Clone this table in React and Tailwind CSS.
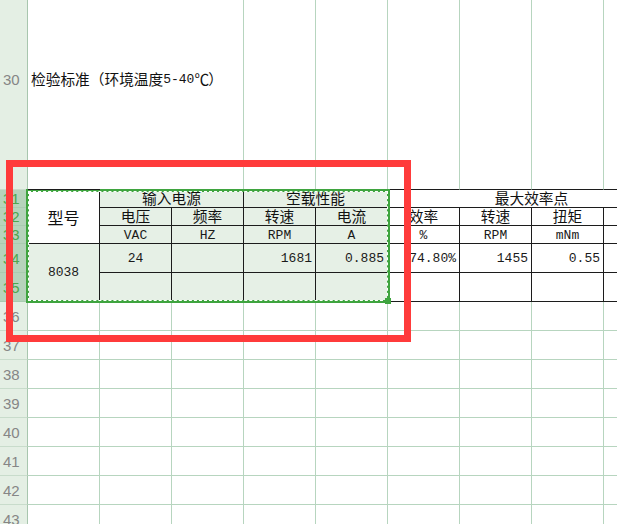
import React from "react";

const K = "border-[#1c1c1c]";
const CN = "font-['Noto_Sans_CJK_SC',sans-serif] text-[14.7px] leading-none text-[#111]";
const MONO = "font-['Liberation_Mono',monospace] text-[13px] leading-none text-[#1a1a1a]";

function RowHead({ n, sel, tall }) {
  const base =
    "flex items-center pl-[3px] border-r border-b font-['Liberation_Sans',sans-serif] text-[15px] leading-none whitespace-nowrap overflow-visible";
  const look = sel
    ? " bg-[#b6d3bb] text-[#4fa64f] border-r-[#9cc2a4] border-b-[#a9cbb0]"
    : " bg-[#e4efe4] text-[#868686] border-r-[#a8c6ae] border-b-[#c8dccb]";
  return <div className={base + look + (tall ? " pb-[30px]" : "")}>{n}</div>;
}

function G() {
  return <div className="border-r border-b border-[#b7d5bf]" />;
}

function T({ sel, white, align = "center", font = "mono", children, extra = "" }) {
  const bg = sel ? " bg-[#e6f0e6]" : white ? " bg-white" : "";
  const al = align === "right" ? " justify-end pr-[3px]" : " justify-center";
  const f = font === "cn" ? " " + CN : " " + MONO;
  return (
    <div className={"flex items-center border-r border-b " + K + bg + al + f + " " + extra}>
      {children}
    </div>
  );
}

export default function App() {
  const lower = [];
  for (let n = 36; n <= 43; n++) {
    lower.push(<RowHead key={"h" + n} n={n} />);
    for (let c = 0; c < 9; c++) lower.push(<G key={n + "-" + c} />);
  }
  return (
    <div className="relative w-[617px] h-[524px] overflow-hidden bg-white">
      <div className="grid grid-cols-[28px_repeat(9,72px)] grid-rows-[190px_18px_18px_18px_29px_29px_29px_29px_29px_29px_29px_29px_29px_29px]">
        {/* row 30 */}
        <RowHead n={30} tall />
        <div className={"flex items-center pb-[30px] pl-[3px] border-b whitespace-nowrap overflow-visible relative z-10 " + K + " " + CN}>
          检验标准（环境温度
          <span className="font-['Liberation_Mono',monospace] text-[13px]">5-40</span>
          <span className="tracking-[-4px]">℃</span>
          <span className="pl-[3px]">）</span>
        </div>
        <div className={"border-b " + K} />
        <div className="border-r border-b border-r-[#b7d5bf] border-b-[#1c1c1c]" />
        <div className="border-r border-b border-r-[#b7d5bf] border-b-[#1c1c1c]" />
        <div className="border-r border-b border-r-[#b7d5bf] border-b-[#1c1c1c]" />
        <div className="border-r border-b border-r-[#b7d5bf] border-b-[#1c1c1c]" />
        <div className="border-r border-b border-r-[#b7d5bf] border-b-[#1c1c1c]" />
        <div className="border-r border-b border-r-[#b7d5bf] border-b-[#1c1c1c]" />
        <div className="border-r border-b border-r-[#b7d5bf] border-b-[#1c1c1c]" />

        {/* row 31 */}
        <RowHead n={31} sel />
        <T white font="cn" extra="row-span-3 text-[16px]">型号</T>
        <T sel font="cn" extra="col-span-2">输入电源</T>
        <T sel font="cn" extra="col-span-2">空载性能</T>
        <T white font="cn" extra="col-span-4">最大效率点</T>

        {/* row 32 */}
        <RowHead n={32} sel />
        <T sel font="cn">电压</T>
        <T sel font="cn">频率</T>
        <T sel font="cn">转速</T>
        <T sel font="cn">电流</T>
        <T white font="cn">效率</T>
        <T white font="cn">转速</T>
        <T white font="cn">扭矩</T>
        <T white font="cn"></T>

        {/* row 33 */}
        <RowHead n={33} sel />
        <T sel extra="pt-[2px]">VAC</T>
        <T sel extra="pt-[2px]">HZ</T>
        <T sel extra="pt-[2px]">RPM</T>
        <T sel extra="pt-[2px]">A</T>
        <T white extra="pt-[2px]">%</T>
        <T white extra="pt-[2px]">RPM</T>
        <T white extra="pt-[2px]">mNm</T>
        <T white></T>

        {/* row 34 */}
        <RowHead n={34} sel />
        <T sel extra="row-span-2">8038</T>
        <T sel>24</T>
        <T sel></T>
        <T sel align="right">1681</T>
        <T sel align="right">0.885</T>
        <T white align="right">74.80%</T>
        <T white align="right">1455</T>
        <T white align="right">0.55</T>
        <T white></T>

        {/* row 35 */}
        <RowHead n={35} sel />
        <T sel></T>
        <T sel></T>
        <T sel></T>
        <T sel></T>
        <T white></T>
        <T white></T>
        <T white></T>
        <T white></T>

        {lower}
      </div>

      {/* copy selection marquee */}
      <div className="absolute left-[26px] top-[189px] w-[364px] h-[114px] border-[3px] border-[#3fa43f]">
        <div className="absolute -inset-px border border-dashed border-white" />
      </div>
      <div className="absolute left-[385px] top-[298px] w-[6px] h-[6px] bg-[#3fa43f]" />

      {/* red annotation box */}
      <div className="absolute left-[6px] top-[160px] w-[405px] h-[182px] border-[7px] border-[#ff3b3b]" />
    </div>
  );
}
